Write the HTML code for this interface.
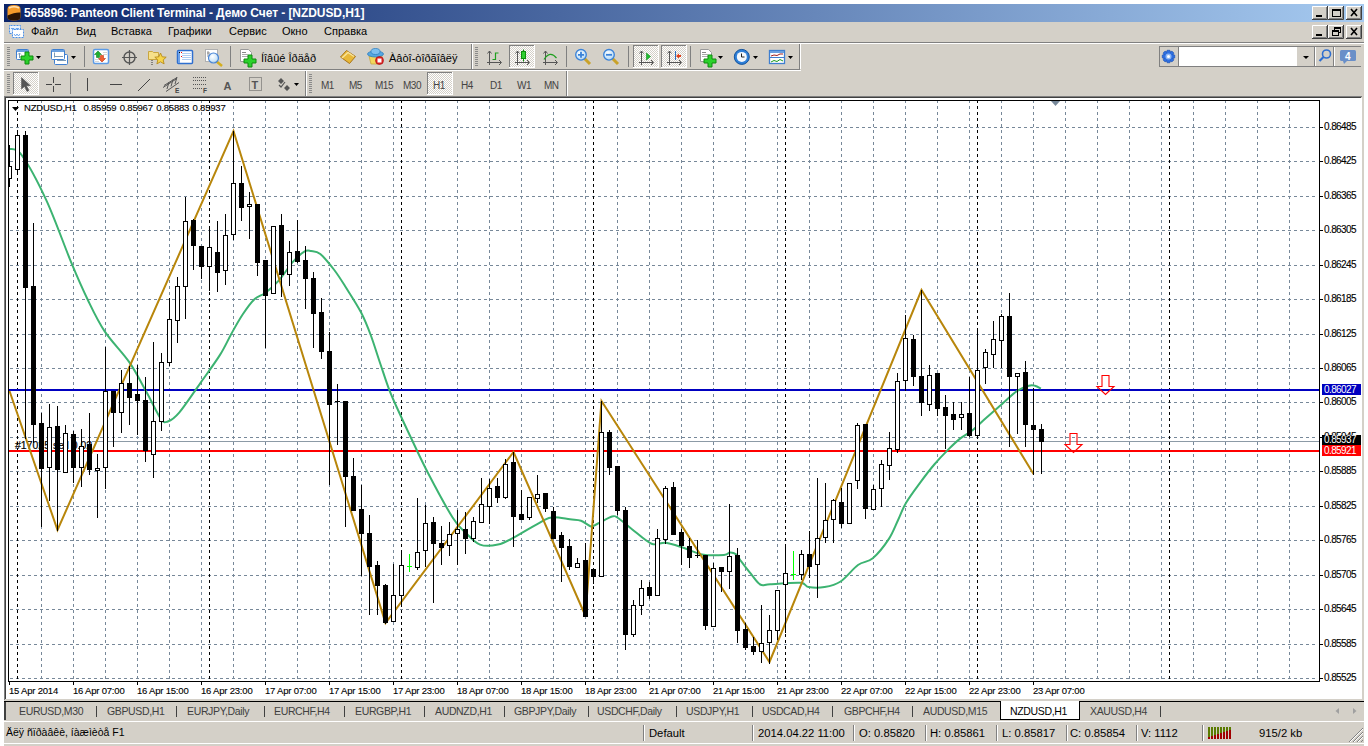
<!DOCTYPE html><html><head><meta charset="utf-8"><style>
*{margin:0;padding:0;box-sizing:border-box}
html,body{width:1368px;height:746px;overflow:hidden;background:#fff}
body{position:relative;font-family:"Liberation Sans",sans-serif;font-size:11px;color:#000}
.a{position:absolute}
.t{position:absolute;font-size:9.5px;line-height:12px;white-space:nowrap;color:#000;letter-spacing:-0.2px;-webkit-text-stroke:0.12px #000}
.p{position:absolute;font-size:10px;line-height:12px;white-space:nowrap;color:#000;letter-spacing:-0.6px;-webkit-text-stroke:0.12px #000}
.tf{position:absolute;top:80px;font-size:10px;line-height:12px;color:#444;letter-spacing:-0.5px;white-space:nowrap}
.tag{position:absolute;left:1322px;width:39px;height:11px;color:#fff;font-size:10px;line-height:11px;padding-left:2px;letter-spacing:-0.6px;white-space:nowrap}
.m{position:absolute;top:24px;font-size:11px;line-height:14px;white-space:nowrap}
.tab{position:absolute;top:704px;font-size:10.5px;line-height:14px;color:#404040;white-space:nowrap;letter-spacing:-0.35px}
.sep{position:absolute;top:706px;width:1px;height:11px;background:#404040}
.st{position:absolute;top:725px;font-size:10.5px;line-height:14px;white-space:nowrap}
.st2{position:absolute;top:726px;font-size:11.25px;line-height:14px;white-space:nowrap}
.ss{position:absolute;top:725px;width:2px;height:16px;border-left:1px solid #808080;border-right:1px solid #fff}
</style></head><body><div class="a" style="left:4px;top:4px;width:1360px;height:742px;background:#D4D0C8"></div><div class="a" style="left:4px;top:743px;width:1360px;height:1px;background:#fff"></div><div class="a" style="left:4px;top:4px;width:1360px;height:18px;background:linear-gradient(to right,#0A246A,#A6CAF0)"></div><div class="a" style="left:24px;top:5px;font-weight:bold;color:#fff;font-size:12px;line-height:16px;letter-spacing:-0.07px;white-space:nowrap">565896: Panteon Client Terminal - Демо Счет - [NZDUSD,H1]</div><div class="m" style="left:31px">Файл</div><div class="m" style="left:76px">Вид</div><div class="m" style="left:111px">Вставка</div><div class="m" style="left:168px">Графики</div><div class="m" style="left:229px">Сервис</div><div class="m" style="left:282px">Окно</div><div class="m" style="left:324px">Справка</div><div class="a" style="left:4px;top:42px;width:1360px;height:1px;background:#808080"></div><div class="a" style="left:4px;top:43px;width:1360px;height:1px;background:#fff"></div><svg width="1368" height="746" style="position:absolute;left:0;top:0"><rect x="4" y="96" width="1360" height="605" fill="#D4D0C8"/><rect x="4" y="96" width="1358" height="1" fill="#808080"/><rect x="4" y="96" width="1" height="604" fill="#808080"/><rect x="5" y="97" width="1356" height="1" fill="#404040"/><rect x="5" y="97" width="1" height="602" fill="#404040"/><rect x="6" y="98" width="1356" height="601" fill="#ffffff"/><g shape-rendering="crispEdges"><line x1="10" y1="127.5" x2="1318" y2="127.5" stroke="#778899" stroke-dasharray="3 3"/><line x1="10" y1="161.5" x2="1318" y2="161.5" stroke="#778899" stroke-dasharray="3 3"/><line x1="10" y1="196.5" x2="1318" y2="196.5" stroke="#778899" stroke-dasharray="3 3"/><line x1="10" y1="230.5" x2="1318" y2="230.5" stroke="#778899" stroke-dasharray="3 3"/><line x1="10" y1="265.5" x2="1318" y2="265.5" stroke="#778899" stroke-dasharray="3 3"/><line x1="10" y1="299.5" x2="1318" y2="299.5" stroke="#778899" stroke-dasharray="3 3"/><line x1="10" y1="334.5" x2="1318" y2="334.5" stroke="#778899" stroke-dasharray="3 3"/><line x1="10" y1="368.5" x2="1318" y2="368.5" stroke="#778899" stroke-dasharray="3 3"/><line x1="10" y1="402.5" x2="1318" y2="402.5" stroke="#778899" stroke-dasharray="3 3"/><line x1="10" y1="437.5" x2="1318" y2="437.5" stroke="#778899" stroke-dasharray="3 3"/><line x1="10" y1="471.5" x2="1318" y2="471.5" stroke="#778899" stroke-dasharray="3 3"/><line x1="10" y1="506.5" x2="1318" y2="506.5" stroke="#778899" stroke-dasharray="3 3"/><line x1="10" y1="540.5" x2="1318" y2="540.5" stroke="#778899" stroke-dasharray="3 3"/><line x1="10" y1="575.5" x2="1318" y2="575.5" stroke="#778899" stroke-dasharray="3 3"/><line x1="10" y1="609.5" x2="1318" y2="609.5" stroke="#778899" stroke-dasharray="3 3"/><line x1="10" y1="644.5" x2="1318" y2="644.5" stroke="#778899" stroke-dasharray="3 3"/><line x1="10" y1="678.5" x2="1318" y2="678.5" stroke="#778899" stroke-dasharray="3 3"/><line x1="41.5" y1="100" x2="41.5" y2="681" stroke="#778899" stroke-dasharray="3 3"/><line x1="73.5" y1="100" x2="73.5" y2="681" stroke="#778899" stroke-dasharray="3 3"/><line x1="105.5" y1="100" x2="105.5" y2="681" stroke="#778899" stroke-dasharray="3 3"/><line x1="137.5" y1="100" x2="137.5" y2="681" stroke="#778899" stroke-dasharray="3 3"/><line x1="169.5" y1="100" x2="169.5" y2="681" stroke="#778899" stroke-dasharray="3 3"/><line x1="201.5" y1="100" x2="201.5" y2="681" stroke="#778899" stroke-dasharray="3 3"/><line x1="233.5" y1="100" x2="233.5" y2="681" stroke="#778899" stroke-dasharray="3 3"/><line x1="265.5" y1="100" x2="265.5" y2="681" stroke="#778899" stroke-dasharray="3 3"/><line x1="297.5" y1="100" x2="297.5" y2="681" stroke="#778899" stroke-dasharray="3 3"/><line x1="329.5" y1="100" x2="329.5" y2="681" stroke="#778899" stroke-dasharray="3 3"/><line x1="361.5" y1="100" x2="361.5" y2="681" stroke="#778899" stroke-dasharray="3 3"/><line x1="393.5" y1="100" x2="393.5" y2="681" stroke="#778899" stroke-dasharray="3 3"/><line x1="425.5" y1="100" x2="425.5" y2="681" stroke="#778899" stroke-dasharray="3 3"/><line x1="457.5" y1="100" x2="457.5" y2="681" stroke="#778899" stroke-dasharray="3 3"/><line x1="489.5" y1="100" x2="489.5" y2="681" stroke="#778899" stroke-dasharray="3 3"/><line x1="521.5" y1="100" x2="521.5" y2="681" stroke="#778899" stroke-dasharray="3 3"/><line x1="553.5" y1="100" x2="553.5" y2="681" stroke="#778899" stroke-dasharray="3 3"/><line x1="585.5" y1="100" x2="585.5" y2="681" stroke="#778899" stroke-dasharray="3 3"/><line x1="617.5" y1="100" x2="617.5" y2="681" stroke="#778899" stroke-dasharray="3 3"/><line x1="649.5" y1="100" x2="649.5" y2="681" stroke="#778899" stroke-dasharray="3 3"/><line x1="681.5" y1="100" x2="681.5" y2="681" stroke="#778899" stroke-dasharray="3 3"/><line x1="713.5" y1="100" x2="713.5" y2="681" stroke="#778899" stroke-dasharray="3 3"/><line x1="745.5" y1="100" x2="745.5" y2="681" stroke="#778899" stroke-dasharray="3 3"/><line x1="777.5" y1="100" x2="777.5" y2="681" stroke="#778899" stroke-dasharray="3 3"/><line x1="809.5" y1="100" x2="809.5" y2="681" stroke="#778899" stroke-dasharray="3 3"/><line x1="841.5" y1="100" x2="841.5" y2="681" stroke="#778899" stroke-dasharray="3 3"/><line x1="873.5" y1="100" x2="873.5" y2="681" stroke="#778899" stroke-dasharray="3 3"/><line x1="905.5" y1="100" x2="905.5" y2="681" stroke="#778899" stroke-dasharray="3 3"/><line x1="937.5" y1="100" x2="937.5" y2="681" stroke="#778899" stroke-dasharray="3 3"/><line x1="969.5" y1="100" x2="969.5" y2="681" stroke="#778899" stroke-dasharray="3 3"/><line x1="1001.5" y1="100" x2="1001.5" y2="681" stroke="#778899" stroke-dasharray="3 3"/><line x1="1033.5" y1="100" x2="1033.5" y2="681" stroke="#778899" stroke-dasharray="3 3"/><line x1="1065.5" y1="100" x2="1065.5" y2="681" stroke="#778899" stroke-dasharray="3 3"/><line x1="1097.5" y1="100" x2="1097.5" y2="681" stroke="#778899" stroke-dasharray="3 3"/><line x1="1129.5" y1="100" x2="1129.5" y2="681" stroke="#778899" stroke-dasharray="3 3"/><line x1="1161.5" y1="100" x2="1161.5" y2="681" stroke="#778899" stroke-dasharray="3 3"/><line x1="1193.5" y1="100" x2="1193.5" y2="681" stroke="#778899" stroke-dasharray="3 3"/><line x1="1225.5" y1="100" x2="1225.5" y2="681" stroke="#778899" stroke-dasharray="3 3"/><line x1="1257.5" y1="100" x2="1257.5" y2="681" stroke="#778899" stroke-dasharray="3 3"/><line x1="1289.5" y1="100" x2="1289.5" y2="681" stroke="#778899" stroke-dasharray="3 3"/></g><g shape-rendering="crispEdges"><line x1="17.5" y1="100" x2="17.5" y2="681" stroke="#000" stroke-dasharray="3 3"/><line x1="209.5" y1="100" x2="209.5" y2="681" stroke="#000" stroke-dasharray="3 3"/><line x1="401.5" y1="100" x2="401.5" y2="681" stroke="#000" stroke-dasharray="3 3"/><line x1="593.5" y1="100" x2="593.5" y2="681" stroke="#000" stroke-dasharray="3 3"/><line x1="785.5" y1="100" x2="785.5" y2="681" stroke="#000" stroke-dasharray="3 3"/><line x1="977.5" y1="100" x2="977.5" y2="681" stroke="#000" stroke-dasharray="3 3"/><line x1="1169.5" y1="100" x2="1169.5" y2="681" stroke="#000" stroke-dasharray="3 3"/></g><text x="15" y="449" font-family="Liberation Sans" font-size="10.5" fill="#000" stroke="#000" stroke-width="0.2">#17025 sell 0.02</text><rect x="9" y="389" width="1310" height="2" fill="#0000C0"/><rect x="92" y="441" width="1227" height="1" fill="#8C9AA6"/><rect x="9" y="450" width="1310" height="2" fill="#FF0000"/><path d="M9,148.7 C11.1,149.8 15.4,146.3 21.6,155 C27.9,163.7 38.2,182.6 46.5,200.6 C54.8,218.6 64.5,246.3 71.4,262.9 C78.3,279.5 82.5,288.9 88,300.3 C93.5,311.7 97.8,321.0 104.7,331.4 C111.6,341.8 122.7,352.6 129.6,362.6 C136.5,372.6 141.0,382.3 146.2,391.6 C151.4,400.9 157.1,413.6 160.7,418.6 C164.3,423.6 164.7,422.5 167.8,421.5 C170.9,420.5 174.0,418.8 179.4,412.4 C184.8,406.0 193.4,392.9 200.2,383.3 C207.0,373.7 214.8,363.2 220,354.9 C225.2,346.6 227.6,340.5 231.4,333.7 C235.2,326.9 239.0,320.0 242.8,314.3 C246.6,308.6 250.4,303.1 254.2,299.5 C258.0,295.9 261.4,295.9 265.6,292.7 C269.8,289.5 274.6,285.2 279.2,280.1 C283.8,275.0 288.7,266.6 292.9,261.9 C297.1,257.1 301.3,253.4 304.3,251.6 C307.3,249.8 308.4,250.6 311.1,251 C313.8,251.4 316.5,250.8 320.3,253.9 C324.1,257.0 329.7,264.1 333.9,269.5 C338.1,274.9 340.8,279.3 345.3,286.5 C349.8,293.7 356.9,304.4 361.1,312.5 C365.3,320.6 367.5,326.4 370.7,335 C373.9,343.6 377.3,354.9 380.4,364 C383.5,373.1 386.3,382.0 389.2,389.7 C392.1,397.4 394.4,402.1 398,410 C401.6,417.9 405.6,426.5 410.6,437 C415.6,447.5 421.0,459.6 428,473 C435.0,486.4 446.4,507.7 452.6,517.5 C458.8,527.3 460.4,527.5 465,532 C469.6,536.5 474.5,542.5 480,544.6 C485.5,546.7 492.4,545.8 498,544.6 C503.6,543.4 506.4,541.5 513.7,537.6 C521.0,533.7 535.5,524.7 542,521.3 C548.5,517.9 548.3,517.6 553,517.3 C557.7,517.0 565.3,518.7 570,519.3 C574.7,519.9 577.5,519.5 581,520.7 C584.5,521.9 588.2,525.9 591,526.4 C593.8,526.9 594.5,525.1 598,523.5 C601.5,521.9 608.7,517.4 612,516.5 C615.3,515.6 614.7,515.9 618,518 C621.3,520.1 626.4,524.9 632,529.2 C637.6,533.5 646.0,541.5 651.6,543.8 C657.2,546.0 660.5,542.1 665.7,542.7 C670.9,543.3 676.6,545.5 682.6,547.5 C688.6,549.5 695.1,553.2 702,554.5 C708.9,555.8 719.3,555.3 724,555 C728.7,554.7 728.0,552.6 730,552.5 C732.0,552.4 734.1,552.8 736,554.3 C737.9,555.8 738.9,558.5 741.4,561.7 C743.9,564.9 747.7,569.9 750.8,573.7 C753.9,577.5 757.0,582.8 760.2,584.5 C763.5,586.2 763.6,584.5 770.3,584.2 C777.0,583.9 794.0,582.3 800.4,582.8 C806.8,583.3 804.5,586.4 808.5,587.1 C812.5,587.8 819.2,588.0 824.6,587.1 C830.0,586.2 835.0,585.2 840.6,581.5 C846.2,577.8 852.6,568.9 858,565 C863.4,561.1 867.6,562.6 872.8,558.3 C877.9,553.9 884.7,545.3 888.9,538.9 C893.1,532.5 895.2,526.0 898.1,520 C901.0,514.0 902.4,508.9 906.1,502.7 C909.8,496.5 915.5,489.0 920.2,482.6 C924.9,476.2 929.6,470.0 934.3,464.5 C939.0,459.0 944.0,453.8 948.4,449.4 C952.8,445.0 956.4,441.6 960.4,438.4 C964.4,435.2 968.5,433.5 972.5,430.3 C976.5,427.1 979.9,423.5 984.6,419.3 C989.3,415.1 995.3,409.9 1000.7,405.2 C1006.1,400.5 1012.1,394.4 1016.8,391.1 C1021.5,387.9 1025.8,386.6 1028.8,385.7 C1031.8,384.8 1032.9,385.2 1034.9,385.7 C1036.9,386.2 1039.9,388.0 1040.9,388.5" fill="none" stroke="#3CB371" stroke-width="2"/><polyline points="9.5,391 57.5,530 233.5,131 385.5,623 513.5,452 585.5,616 601.5,401 769.5,662 921.5,290 1033.5,474" fill="none" stroke="#B8860B" stroke-width="2" stroke-linejoin="miter"/><g shape-rendering="crispEdges" clip-path="url(#cc)"><rect x="9" y="145" width="1" height="42" fill="#000"/><rect x="7" y="166" width="5" height="13" fill="#000"/><rect x="8" y="167" width="3" height="11" fill="#fff"/><rect x="17" y="131" width="1" height="44" fill="#000"/><rect x="15" y="135" width="5" height="35" fill="#000"/><rect x="16" y="136" width="3" height="33" fill="#fff"/><rect x="25" y="131" width="1" height="308" fill="#000"/><rect x="23" y="135" width="5" height="153" fill="#000"/><rect x="33" y="223" width="1" height="220" fill="#000"/><rect x="31" y="286" width="5" height="139" fill="#000"/><rect x="41" y="413" width="1" height="114" fill="#000"/><rect x="39" y="423" width="5" height="46" fill="#000"/><rect x="49" y="404" width="1" height="97" fill="#000"/><rect x="47" y="427" width="5" height="41" fill="#000"/><rect x="48" y="428" width="3" height="39" fill="#fff"/><rect x="57" y="406" width="1" height="125" fill="#000"/><rect x="55" y="426" width="5" height="44" fill="#000"/><rect x="65" y="425" width="1" height="48" fill="#000"/><rect x="63" y="433" width="5" height="40" fill="#000"/><rect x="64" y="434" width="3" height="38" fill="#fff"/><rect x="73" y="431" width="1" height="52" fill="#000"/><rect x="71" y="434" width="5" height="34" fill="#000"/><rect x="81" y="429" width="1" height="58" fill="#000"/><rect x="79" y="446" width="5" height="22" fill="#000"/><rect x="80" y="447" width="3" height="20" fill="#fff"/><rect x="89" y="413" width="1" height="62" fill="#000"/><rect x="87" y="444" width="5" height="26" fill="#000"/><rect x="97" y="454" width="1" height="64" fill="#000"/><rect x="95" y="468" width="5" height="3" fill="#000"/><rect x="96" y="469" width="3" height="1" fill="#fff"/><rect x="105" y="347" width="1" height="142" fill="#000"/><rect x="103" y="391" width="5" height="77" fill="#000"/><rect x="104" y="392" width="3" height="75" fill="#fff"/><rect x="113" y="391" width="1" height="56" fill="#000"/><rect x="111" y="391" width="5" height="22" fill="#000"/><rect x="121" y="370" width="1" height="63" fill="#000"/><rect x="119" y="383" width="5" height="30" fill="#000"/><rect x="120" y="384" width="3" height="28" fill="#fff"/><rect x="129" y="366" width="1" height="59" fill="#000"/><rect x="127" y="383" width="5" height="15" fill="#000"/><rect x="137" y="365" width="1" height="70" fill="#000"/><rect x="135" y="394" width="5" height="7" fill="#000"/><rect x="145" y="377" width="1" height="85" fill="#000"/><rect x="143" y="400" width="5" height="51" fill="#000"/><rect x="153" y="342" width="1" height="136" fill="#000"/><rect x="151" y="421" width="5" height="34" fill="#000"/><rect x="152" y="422" width="3" height="32" fill="#fff"/><rect x="161" y="353" width="1" height="78" fill="#000"/><rect x="159" y="362" width="5" height="60" fill="#000"/><rect x="160" y="363" width="3" height="58" fill="#fff"/><rect x="169" y="298" width="1" height="68" fill="#000"/><rect x="167" y="319" width="5" height="44" fill="#000"/><rect x="168" y="320" width="3" height="42" fill="#fff"/><rect x="177" y="277" width="1" height="66" fill="#000"/><rect x="175" y="286" width="5" height="35" fill="#000"/><rect x="176" y="287" width="3" height="33" fill="#fff"/><rect x="185" y="197" width="1" height="122" fill="#000"/><rect x="183" y="221" width="5" height="66" fill="#000"/><rect x="184" y="222" width="3" height="64" fill="#fff"/><rect x="193" y="219" width="1" height="51" fill="#000"/><rect x="191" y="220" width="5" height="26" fill="#000"/><rect x="201" y="246" width="1" height="33" fill="#000"/><rect x="199" y="246" width="5" height="21" fill="#000"/><rect x="209" y="226" width="1" height="65" fill="#000"/><rect x="207" y="247" width="5" height="20" fill="#000"/><rect x="208" y="248" width="3" height="18" fill="#fff"/><rect x="217" y="221" width="1" height="71" fill="#000"/><rect x="215" y="252" width="5" height="21" fill="#000"/><rect x="225" y="214" width="1" height="71" fill="#000"/><rect x="223" y="235" width="5" height="36" fill="#000"/><rect x="224" y="236" width="3" height="34" fill="#fff"/><rect x="233" y="131" width="1" height="109" fill="#000"/><rect x="231" y="183" width="5" height="52" fill="#000"/><rect x="232" y="184" width="3" height="50" fill="#fff"/><rect x="241" y="166" width="1" height="55" fill="#000"/><rect x="239" y="183" width="5" height="25" fill="#000"/><rect x="249" y="192" width="1" height="47" fill="#000"/><rect x="247" y="204" width="5" height="3" fill="#000"/><rect x="248" y="205" width="3" height="1" fill="#fff"/><rect x="257" y="204" width="1" height="72" fill="#000"/><rect x="255" y="204" width="5" height="59" fill="#000"/><rect x="265" y="260" width="1" height="88" fill="#000"/><rect x="263" y="260" width="5" height="36" fill="#000"/><rect x="273" y="226" width="1" height="68" fill="#000"/><rect x="271" y="226" width="5" height="68" fill="#000"/><rect x="272" y="227" width="3" height="66" fill="#fff"/><rect x="281" y="214" width="1" height="83" fill="#000"/><rect x="279" y="225" width="5" height="50" fill="#000"/><rect x="289" y="241" width="1" height="45" fill="#000"/><rect x="287" y="252" width="5" height="23" fill="#000"/><rect x="288" y="253" width="3" height="21" fill="#fff"/><rect x="297" y="220" width="1" height="43" fill="#000"/><rect x="295" y="251" width="5" height="11" fill="#000"/><rect x="305" y="246" width="1" height="63" fill="#000"/><rect x="303" y="260" width="5" height="19" fill="#000"/><rect x="313" y="272" width="1" height="76" fill="#000"/><rect x="311" y="278" width="5" height="36" fill="#000"/><rect x="321" y="298" width="1" height="61" fill="#000"/><rect x="319" y="312" width="5" height="40" fill="#000"/><rect x="329" y="332" width="1" height="153" fill="#000"/><rect x="327" y="351" width="5" height="54" fill="#000"/><rect x="337" y="384" width="1" height="61" fill="#000"/><rect x="335" y="401" width="5" height="1" fill="#000"/><rect x="345" y="401" width="1" height="126" fill="#000"/><rect x="343" y="401" width="5" height="76" fill="#000"/><rect x="353" y="458" width="1" height="53" fill="#000"/><rect x="351" y="476" width="5" height="35" fill="#000"/><rect x="361" y="485" width="1" height="91" fill="#000"/><rect x="359" y="509" width="5" height="25" fill="#000"/><rect x="369" y="515" width="1" height="100" fill="#000"/><rect x="367" y="533" width="5" height="34" fill="#000"/><rect x="377" y="561" width="1" height="54" fill="#000"/><rect x="375" y="565" width="5" height="21" fill="#000"/><rect x="385" y="584" width="1" height="40" fill="#000"/><rect x="383" y="585" width="5" height="38" fill="#000"/><rect x="393" y="564" width="1" height="58" fill="#000"/><rect x="391" y="595" width="5" height="27" fill="#000"/><rect x="392" y="596" width="3" height="25" fill="#fff"/><rect x="401" y="550" width="1" height="57" fill="#000"/><rect x="399" y="565" width="5" height="31" fill="#000"/><rect x="400" y="566" width="3" height="29" fill="#fff"/><rect x="409" y="554" width="1" height="18" fill="#00FF00"/><rect x="407" y="566" width="5" height="1" fill="#00FF00"/><rect x="417" y="498" width="1" height="72" fill="#000"/><rect x="415" y="552" width="5" height="16" fill="#000"/><rect x="416" y="553" width="3" height="14" fill="#fff"/><rect x="425" y="505" width="1" height="62" fill="#000"/><rect x="423" y="523" width="5" height="28" fill="#000"/><rect x="424" y="524" width="3" height="26" fill="#fff"/><rect x="433" y="517" width="1" height="86" fill="#000"/><rect x="431" y="522" width="5" height="22" fill="#000"/><rect x="441" y="526" width="1" height="39" fill="#000"/><rect x="439" y="543" width="5" height="5" fill="#000"/><rect x="449" y="522" width="1" height="34" fill="#000"/><rect x="447" y="534" width="5" height="12" fill="#000"/><rect x="448" y="535" width="3" height="10" fill="#fff"/><rect x="457" y="510" width="1" height="55" fill="#000"/><rect x="455" y="529" width="5" height="5" fill="#000"/><rect x="456" y="530" width="3" height="3" fill="#fff"/><rect x="465" y="512" width="1" height="42" fill="#000"/><rect x="463" y="529" width="5" height="10" fill="#000"/><rect x="473" y="517" width="1" height="25" fill="#000"/><rect x="471" y="521" width="5" height="18" fill="#000"/><rect x="472" y="522" width="3" height="16" fill="#fff"/><rect x="481" y="478" width="1" height="45" fill="#000"/><rect x="479" y="504" width="5" height="19" fill="#000"/><rect x="480" y="505" width="3" height="17" fill="#fff"/><rect x="489" y="479" width="1" height="45" fill="#000"/><rect x="487" y="488" width="5" height="19" fill="#000"/><rect x="488" y="489" width="3" height="17" fill="#fff"/><rect x="497" y="478" width="1" height="25" fill="#000"/><rect x="495" y="486" width="5" height="12" fill="#000"/><rect x="505" y="459" width="1" height="40" fill="#000"/><rect x="503" y="464" width="5" height="34" fill="#000"/><rect x="504" y="465" width="3" height="32" fill="#fff"/><rect x="513" y="452" width="1" height="95" fill="#000"/><rect x="511" y="462" width="5" height="55" fill="#000"/><rect x="521" y="490" width="1" height="30" fill="#000"/><rect x="519" y="514" width="5" height="6" fill="#000"/><rect x="529" y="497" width="1" height="23" fill="#000"/><rect x="527" y="497" width="5" height="21" fill="#000"/><rect x="528" y="498" width="3" height="19" fill="#fff"/><rect x="537" y="475" width="1" height="28" fill="#000"/><rect x="535" y="494" width="5" height="5" fill="#000"/><rect x="536" y="495" width="3" height="3" fill="#fff"/><rect x="545" y="493" width="1" height="19" fill="#000"/><rect x="543" y="493" width="5" height="16" fill="#000"/><rect x="553" y="507" width="1" height="32" fill="#000"/><rect x="551" y="511" width="5" height="28" fill="#000"/><rect x="561" y="532" width="1" height="50" fill="#000"/><rect x="559" y="535" width="5" height="13" fill="#000"/><rect x="569" y="539" width="1" height="31" fill="#000"/><rect x="567" y="546" width="5" height="21" fill="#000"/><rect x="577" y="558" width="1" height="10" fill="#000"/><rect x="575" y="563" width="5" height="5" fill="#000"/><rect x="576" y="564" width="3" height="3" fill="#fff"/><rect x="585" y="543" width="1" height="74" fill="#000"/><rect x="583" y="560" width="5" height="57" fill="#000"/><rect x="593" y="568" width="1" height="16" fill="#000"/><rect x="591" y="569" width="5" height="8" fill="#000"/><rect x="601" y="401" width="1" height="176" fill="#000"/><rect x="599" y="432" width="5" height="145" fill="#000"/><rect x="600" y="433" width="3" height="143" fill="#fff"/><rect x="609" y="430" width="1" height="45" fill="#000"/><rect x="607" y="432" width="5" height="36" fill="#000"/><rect x="617" y="466" width="1" height="49" fill="#000"/><rect x="615" y="466" width="5" height="45" fill="#000"/><rect x="625" y="507" width="1" height="143" fill="#000"/><rect x="623" y="510" width="5" height="125" fill="#000"/><rect x="633" y="600" width="1" height="37" fill="#000"/><rect x="631" y="605" width="5" height="30" fill="#000"/><rect x="632" y="606" width="3" height="28" fill="#fff"/><rect x="641" y="580" width="1" height="35" fill="#000"/><rect x="639" y="588" width="5" height="18" fill="#000"/><rect x="640" y="589" width="3" height="16" fill="#fff"/><rect x="649" y="582" width="1" height="17" fill="#000"/><rect x="647" y="587" width="5" height="9" fill="#000"/><rect x="657" y="529" width="1" height="67" fill="#000"/><rect x="655" y="538" width="5" height="58" fill="#000"/><rect x="656" y="539" width="3" height="56" fill="#fff"/><rect x="665" y="486" width="1" height="58" fill="#000"/><rect x="663" y="488" width="5" height="52" fill="#000"/><rect x="664" y="489" width="3" height="50" fill="#fff"/><rect x="673" y="482" width="1" height="53" fill="#000"/><rect x="671" y="487" width="5" height="48" fill="#000"/><rect x="681" y="529" width="1" height="36" fill="#000"/><rect x="679" y="532" width="5" height="14" fill="#000"/><rect x="689" y="538" width="1" height="30" fill="#000"/><rect x="687" y="546" width="5" height="12" fill="#000"/><rect x="697" y="540" width="1" height="18" fill="#000"/><rect x="695" y="555" width="5" height="1" fill="#000"/><rect x="705" y="555" width="1" height="75" fill="#000"/><rect x="703" y="555" width="5" height="71" fill="#000"/><rect x="713" y="563" width="1" height="64" fill="#000"/><rect x="711" y="568" width="5" height="59" fill="#000"/><rect x="712" y="569" width="3" height="57" fill="#fff"/><rect x="721" y="567" width="1" height="25" fill="#000"/><rect x="719" y="567" width="5" height="5" fill="#000"/><rect x="729" y="504" width="1" height="85" fill="#000"/><rect x="727" y="556" width="5" height="16" fill="#000"/><rect x="728" y="557" width="3" height="14" fill="#fff"/><rect x="737" y="548" width="1" height="95" fill="#000"/><rect x="735" y="555" width="5" height="76" fill="#000"/><rect x="745" y="623" width="1" height="27" fill="#000"/><rect x="743" y="629" width="5" height="19" fill="#000"/><rect x="753" y="637" width="1" height="18" fill="#000"/><rect x="751" y="646" width="5" height="6" fill="#000"/><rect x="761" y="605" width="1" height="58" fill="#000"/><rect x="759" y="643" width="5" height="9" fill="#000"/><rect x="760" y="644" width="3" height="7" fill="#fff"/><rect x="769" y="615" width="1" height="49" fill="#000"/><rect x="767" y="630" width="5" height="13" fill="#000"/><rect x="768" y="631" width="3" height="11" fill="#fff"/><rect x="777" y="590" width="1" height="50" fill="#000"/><rect x="775" y="590" width="5" height="41" fill="#000"/><rect x="776" y="591" width="3" height="39" fill="#fff"/><rect x="785" y="544" width="1" height="89" fill="#000"/><rect x="783" y="573" width="5" height="12" fill="#000"/><rect x="784" y="574" width="3" height="10" fill="#fff"/><rect x="793" y="551" width="1" height="29" fill="#00FF00"/><rect x="791" y="574" width="5" height="1" fill="#00FF00"/><rect x="801" y="550" width="1" height="30" fill="#000"/><rect x="799" y="554" width="5" height="21" fill="#000"/><rect x="800" y="555" width="3" height="19" fill="#fff"/><rect x="809" y="531" width="1" height="47" fill="#000"/><rect x="807" y="554" width="5" height="13" fill="#000"/><rect x="817" y="478" width="1" height="120" fill="#000"/><rect x="815" y="538" width="5" height="27" fill="#000"/><rect x="816" y="539" width="3" height="25" fill="#fff"/><rect x="825" y="483" width="1" height="60" fill="#000"/><rect x="823" y="520" width="5" height="18" fill="#000"/><rect x="824" y="521" width="3" height="16" fill="#fff"/><rect x="833" y="499" width="1" height="44" fill="#000"/><rect x="831" y="500" width="5" height="20" fill="#000"/><rect x="832" y="501" width="3" height="18" fill="#fff"/><rect x="841" y="488" width="1" height="40" fill="#000"/><rect x="839" y="502" width="5" height="22" fill="#000"/><rect x="849" y="483" width="1" height="41" fill="#000"/><rect x="847" y="483" width="5" height="41" fill="#000"/><rect x="848" y="484" width="3" height="39" fill="#fff"/><rect x="857" y="423" width="1" height="66" fill="#000"/><rect x="855" y="425" width="5" height="56" fill="#000"/><rect x="856" y="426" width="3" height="54" fill="#fff"/><rect x="865" y="424" width="1" height="95" fill="#000"/><rect x="863" y="424" width="5" height="85" fill="#000"/><rect x="873" y="485" width="1" height="25" fill="#000"/><rect x="871" y="489" width="5" height="21" fill="#000"/><rect x="872" y="490" width="3" height="19" fill="#fff"/><rect x="881" y="460" width="1" height="47" fill="#000"/><rect x="879" y="464" width="5" height="25" fill="#000"/><rect x="880" y="465" width="3" height="23" fill="#fff"/><rect x="889" y="432" width="1" height="48" fill="#000"/><rect x="887" y="448" width="5" height="18" fill="#000"/><rect x="888" y="449" width="3" height="16" fill="#fff"/><rect x="897" y="373" width="1" height="80" fill="#000"/><rect x="895" y="381" width="5" height="69" fill="#000"/><rect x="896" y="382" width="3" height="67" fill="#fff"/><rect x="905" y="315" width="1" height="76" fill="#000"/><rect x="903" y="338" width="5" height="43" fill="#000"/><rect x="904" y="339" width="3" height="41" fill="#fff"/><rect x="913" y="335" width="1" height="51" fill="#000"/><rect x="911" y="339" width="5" height="38" fill="#000"/><rect x="921" y="290" width="1" height="126" fill="#000"/><rect x="919" y="376" width="5" height="27" fill="#000"/><rect x="929" y="365" width="1" height="46" fill="#000"/><rect x="927" y="375" width="5" height="30" fill="#000"/><rect x="928" y="376" width="3" height="28" fill="#fff"/><rect x="937" y="373" width="1" height="43" fill="#000"/><rect x="935" y="373" width="5" height="36" fill="#000"/><rect x="945" y="395" width="1" height="54" fill="#000"/><rect x="943" y="407" width="5" height="9" fill="#000"/><rect x="953" y="402" width="1" height="28" fill="#000"/><rect x="951" y="414" width="5" height="6" fill="#000"/><rect x="961" y="402" width="1" height="28" fill="#000"/><rect x="959" y="414" width="5" height="4" fill="#000"/><rect x="960" y="415" width="3" height="2" fill="#fff"/><rect x="969" y="377" width="1" height="60" fill="#000"/><rect x="967" y="413" width="5" height="23" fill="#000"/><rect x="977" y="328" width="1" height="111" fill="#000"/><rect x="975" y="370" width="5" height="66" fill="#000"/><rect x="976" y="371" width="3" height="64" fill="#fff"/><rect x="985" y="349" width="1" height="35" fill="#000"/><rect x="983" y="352" width="5" height="16" fill="#000"/><rect x="984" y="353" width="3" height="14" fill="#fff"/><rect x="993" y="321" width="1" height="47" fill="#000"/><rect x="991" y="339" width="5" height="16" fill="#000"/><rect x="992" y="340" width="3" height="14" fill="#fff"/><rect x="1001" y="314" width="1" height="54" fill="#000"/><rect x="999" y="316" width="5" height="25" fill="#000"/><rect x="1000" y="317" width="3" height="23" fill="#fff"/><rect x="1009" y="293" width="1" height="154" fill="#000"/><rect x="1007" y="316" width="5" height="61" fill="#000"/><rect x="1017" y="373" width="1" height="61" fill="#000"/><rect x="1015" y="373" width="5" height="4" fill="#000"/><rect x="1016" y="374" width="3" height="2" fill="#fff"/><rect x="1025" y="361" width="1" height="86" fill="#000"/><rect x="1023" y="372" width="5" height="53" fill="#000"/><rect x="1033" y="388" width="1" height="87" fill="#000"/><rect x="1031" y="425" width="5" height="5" fill="#000"/><rect x="1041" y="424" width="1" height="50" fill="#000"/><rect x="1039" y="429" width="5" height="13" fill="#000"/></g><defs><clipPath id="cc"><rect x="9" y="101" width="1310" height="580"/></clipPath></defs><path d="M1102 375.5 H1109 V386.5 H1114 L1105.5 394.5 L1097 386.5 H1102 Z" fill="none" stroke="#FF0000" stroke-width="1.1"/><path d="M1070 433.5 H1077 V444.5 H1082 L1073.5 452.5 L1065 444.5 H1070 Z" fill="none" stroke="#FF0000" stroke-width="1.1"/><g shape-rendering="crispEdges"><rect x="8" y="100" width="1312" height="1" fill="#000"/><rect x="8" y="681" width="1312" height="1" fill="#000"/><rect x="8" y="100" width="1" height="582" fill="#000"/><rect x="1319" y="100" width="1" height="582" fill="#000"/><rect x="1320" y="127" width="3" height="1" fill="#000"/><rect x="1320" y="161" width="3" height="1" fill="#000"/><rect x="1320" y="196" width="3" height="1" fill="#000"/><rect x="1320" y="230" width="3" height="1" fill="#000"/><rect x="1320" y="265" width="3" height="1" fill="#000"/><rect x="1320" y="299" width="3" height="1" fill="#000"/><rect x="1320" y="334" width="3" height="1" fill="#000"/><rect x="1320" y="368" width="3" height="1" fill="#000"/><rect x="1320" y="402" width="3" height="1" fill="#000"/><rect x="1320" y="437" width="3" height="1" fill="#000"/><rect x="1320" y="471" width="3" height="1" fill="#000"/><rect x="1320" y="506" width="3" height="1" fill="#000"/><rect x="1320" y="540" width="3" height="1" fill="#000"/><rect x="1320" y="575" width="3" height="1" fill="#000"/><rect x="1320" y="609" width="3" height="1" fill="#000"/><rect x="1320" y="644" width="3" height="1" fill="#000"/><rect x="1320" y="678" width="3" height="1" fill="#000"/><rect x="9" y="682" width="1" height="3" fill="#000"/><rect x="73" y="682" width="1" height="3" fill="#000"/><rect x="137" y="682" width="1" height="3" fill="#000"/><rect x="201" y="682" width="1" height="3" fill="#000"/><rect x="265" y="682" width="1" height="3" fill="#000"/><rect x="329" y="682" width="1" height="3" fill="#000"/><rect x="393" y="682" width="1" height="3" fill="#000"/><rect x="457" y="682" width="1" height="3" fill="#000"/><rect x="521" y="682" width="1" height="3" fill="#000"/><rect x="585" y="682" width="1" height="3" fill="#000"/><rect x="649" y="682" width="1" height="3" fill="#000"/><rect x="713" y="682" width="1" height="3" fill="#000"/><rect x="777" y="682" width="1" height="3" fill="#000"/><rect x="841" y="682" width="1" height="3" fill="#000"/><rect x="905" y="682" width="1" height="3" fill="#000"/><rect x="969" y="682" width="1" height="3" fill="#000"/><rect x="1033" y="682" width="1" height="3" fill="#000"/></g><path d="M1051 101 L1060 101 L1055.5 106 Z" fill="#778899"/><path d="M12 107 L19 107 L15.5 111 Z" fill="#000"/></svg><svg width="1368" height="100" style="position:absolute;left:0;top:0"><defs><pattern id="chk" width="2" height="2" patternUnits="userSpaceOnUse"><rect width="2" height="2" fill="#fff"/><rect width="1" height="1" fill="#D4D0C8"/><rect x="1" y="1" width="1" height="1" fill="#D4D0C8"/></pattern><radialGradient id="lens" cx="0.4" cy="0.35" r="0.7"><stop offset="0" stop-color="#fff"/><stop offset="1" stop-color="#a9d4f5"/></radialGradient><linearGradient id="tb" x1="0" y1="0" x2="1" y2="0"><stop offset="0" stop-color="#0A246A"/><stop offset="1" stop-color="#A6CAF0"/></linearGradient></defs><g shape-rendering="crispEdges"><rect x="4" y="69" width="796" height="1" fill="#808080"/><rect x="4" y="70" width="797" height="1" fill="#fff"/><rect x="471" y="44" width="1" height="25" fill="#808080"/><rect x="472" y="44" width="1" height="25" fill="#fff"/><rect x="799" y="44" width="1" height="25" fill="#808080"/><rect x="800" y="44" width="1" height="25" fill="#fff"/><rect x="305" y="71" width="1" height="25" fill="#808080"/><rect x="306" y="71" width="1" height="25" fill="#fff"/><rect x="566" y="71" width="1" height="25" fill="#808080"/><rect x="567" y="71" width="1" height="25" fill="#fff"/><rect x="7" y="47" width="3" height="1" fill="#8a8a8a"/><rect x="7" y="49" width="3" height="1" fill="#8a8a8a"/><rect x="7" y="51" width="3" height="1" fill="#8a8a8a"/><rect x="7" y="53" width="3" height="1" fill="#8a8a8a"/><rect x="7" y="55" width="3" height="1" fill="#8a8a8a"/><rect x="7" y="57" width="3" height="1" fill="#8a8a8a"/><rect x="7" y="59" width="3" height="1" fill="#8a8a8a"/><rect x="7" y="61" width="3" height="1" fill="#8a8a8a"/><rect x="7" y="63" width="3" height="1" fill="#8a8a8a"/><rect x="7" y="65" width="3" height="1" fill="#8a8a8a"/><rect x="475" y="47" width="3" height="1" fill="#8a8a8a"/><rect x="475" y="49" width="3" height="1" fill="#8a8a8a"/><rect x="475" y="51" width="3" height="1" fill="#8a8a8a"/><rect x="475" y="53" width="3" height="1" fill="#8a8a8a"/><rect x="475" y="55" width="3" height="1" fill="#8a8a8a"/><rect x="475" y="57" width="3" height="1" fill="#8a8a8a"/><rect x="475" y="59" width="3" height="1" fill="#8a8a8a"/><rect x="475" y="61" width="3" height="1" fill="#8a8a8a"/><rect x="475" y="63" width="3" height="1" fill="#8a8a8a"/><rect x="475" y="65" width="3" height="1" fill="#8a8a8a"/><rect x="7" y="74" width="3" height="1" fill="#8a8a8a"/><rect x="7" y="76" width="3" height="1" fill="#8a8a8a"/><rect x="7" y="78" width="3" height="1" fill="#8a8a8a"/><rect x="7" y="80" width="3" height="1" fill="#8a8a8a"/><rect x="7" y="82" width="3" height="1" fill="#8a8a8a"/><rect x="7" y="84" width="3" height="1" fill="#8a8a8a"/><rect x="7" y="86" width="3" height="1" fill="#8a8a8a"/><rect x="7" y="88" width="3" height="1" fill="#8a8a8a"/><rect x="7" y="90" width="3" height="1" fill="#8a8a8a"/><rect x="7" y="92" width="3" height="1" fill="#8a8a8a"/><rect x="309" y="74" width="3" height="1" fill="#8a8a8a"/><rect x="309" y="76" width="3" height="1" fill="#8a8a8a"/><rect x="309" y="78" width="3" height="1" fill="#8a8a8a"/><rect x="309" y="80" width="3" height="1" fill="#8a8a8a"/><rect x="309" y="82" width="3" height="1" fill="#8a8a8a"/><rect x="309" y="84" width="3" height="1" fill="#8a8a8a"/><rect x="309" y="86" width="3" height="1" fill="#8a8a8a"/><rect x="309" y="88" width="3" height="1" fill="#8a8a8a"/><rect x="309" y="90" width="3" height="1" fill="#8a8a8a"/><rect x="309" y="92" width="3" height="1" fill="#8a8a8a"/><rect x="84" y="46" width="1" height="21" fill="#808080"/><rect x="230" y="46" width="1" height="21" fill="#808080"/><rect x="566" y="46" width="1" height="21" fill="#808080"/><rect x="628" y="46" width="1" height="21" fill="#808080"/><rect x="690" y="46" width="1" height="21" fill="#808080"/><rect x="70" y="73" width="1" height="21" fill="#808080"/><rect x="13" y="72" width="26" height="23" fill="url(#chk)"/><rect x="13" y="72" width="26" height="1" fill="#808080"/><rect x="13" y="72" width="1" height="23" fill="#808080"/><rect x="13" y="94" width="26" height="1" fill="#fff"/><rect x="38" y="72" width="1" height="23" fill="#fff"/><rect x="427" y="72" width="26" height="23" fill="url(#chk)"/><rect x="427" y="72" width="26" height="1" fill="#808080"/><rect x="427" y="72" width="1" height="23" fill="#808080"/><rect x="427" y="94" width="26" height="1" fill="#fff"/><rect x="452" y="72" width="1" height="23" fill="#fff"/><rect x="509" y="45" width="26" height="23" fill="url(#chk)"/><rect x="509" y="45" width="26" height="1" fill="#808080"/><rect x="509" y="45" width="1" height="23" fill="#808080"/><rect x="509" y="67" width="26" height="1" fill="#fff"/><rect x="534" y="45" width="1" height="23" fill="#fff"/><rect x="633" y="45" width="26" height="23" fill="url(#chk)"/><rect x="633" y="45" width="26" height="1" fill="#808080"/><rect x="633" y="45" width="1" height="23" fill="#808080"/><rect x="633" y="67" width="26" height="1" fill="#fff"/><rect x="658" y="45" width="1" height="23" fill="#fff"/><rect x="661" y="45" width="26" height="23" fill="url(#chk)"/><rect x="661" y="45" width="26" height="1" fill="#808080"/><rect x="661" y="45" width="1" height="23" fill="#808080"/><rect x="661" y="67" width="26" height="1" fill="#fff"/><rect x="686" y="45" width="1" height="23" fill="#fff"/></g><rect x="16.5" y="49.5" width="12" height="10" rx="1" fill="#fff" stroke="#3F7FD0"/><rect x="17" y="50" width="11" height="2" fill="#6AA0E0"/><path d="M19.5 53 v5 M18 54.5 l1.5 -1.5 l1.5 1.5" stroke="#7a9ab8" fill="none"/><path d="M25 52 h4 v4 h4 v4 h-4 v4 h-4 v-4 h-4 v-4 h4 z" fill="#2BD12B" stroke="#0E8A0E" stroke-width="1" stroke-linejoin="miter"/><path d="M36 56 h5 l-2.5 3 z" fill="#000"/><rect x="54.5" y="54.5" width="13" height="10" rx="1" fill="#fff" stroke="#3F7FD0"/><path d="M57 60.5 h9" stroke="#7a9ab8"/><rect x="51.5" y="49.5" width="13" height="10" rx="1" fill="#fff" stroke="#3F7FD0"/><rect x="52" y="50" width="12" height="2" fill="#6AA0E0"/><path d="M54.5 52.5 v5 M54 56.5 h9" stroke="#7a9ab8" fill="none"/><path d="M71 56 h5 l-2.5 3 z" fill="#000"/><rect x="93.5" y="49.5" width="15" height="14" rx="1.5" fill="#fff" stroke="#5C9BE6" stroke-width="1.5"/><path d="M98 51 l3.5 3.5 h-2 v3 h-3 v-3 h-2 z" fill="#1FAF2F" stroke="#0f7f1f" stroke-width="0.6"/><path d="M102 62 l3.5 -3.5 h-2 v-3 h-3 v3 h-2 z" fill="#F06030" stroke="#c03010" stroke-width="0.6"/><path d="M103 52.5 h4 M103 54.5 h4 M95 59.5 h4 M95 61.5 h4" stroke="#ccc" stroke-width="0.8"/><circle cx="129.5" cy="57.5" r="5.5" fill="none" stroke="#555" stroke-width="1.4"/><path d="M129.5 50 v15 M122 57.5 h15" stroke="#555" stroke-width="1.2"/><path d="M148.5 51.5 h4 l1 1 h5 v7 h-10 z" fill="#F6E08A" stroke="#C9A640"/><path d="M152 60 v6" stroke="#333" stroke-dasharray="1 1"/><path d="M160.5 53 l1.7 3.8 4 .4 -3 2.7 .9 4 -3.6 -2.1 -3.6 2.1 .9 -4 -3 -2.7 4 -.4 z" fill="#F7D54A" stroke="#B78B1C" stroke-width="0.9"/><rect x="177.5" y="50.5" width="15" height="13" rx="1" fill="#fff" stroke="#2F6FCF" stroke-width="1.5"/><rect x="178" y="51" width="2" height="12" fill="#6fa3e8"/><path d="M182 53.5 h9 M182 55.5 h9 M182 57.5 h9 M182 59.5 h9" stroke="#9cc0ef" stroke-width="0.8"/><rect x="181" y="52" width="1" height="1" fill="#e00"/><rect x="181" y="56" width="1" height="1" fill="#e00"/><rect x="179" y="52" width="1" height="1" fill="#000"/><rect x="205.5" y="49.5" width="12" height="12" fill="#fff" stroke="#b0b0b0"/><path d="M208 51 v6 M207 53 h3" stroke="#777" stroke-width="0.8"/><path d="M216 61 l6 5" stroke="#D4AE1E" stroke-width="2.5"/><circle cx="213.5" cy="58" r="5" fill="url(#lens)" stroke="#4a86d6" stroke-width="1.2" fill-opacity="0.85"/><path d="M240.5 49.5 h8 l3 3 v9 h-11 z" fill="#fff" stroke="#9a9a9a"/><rect x="242" y="52" width="4" height="1" fill="#888"/><rect x="242" y="54" width="6" height="1" fill="#aaa"/><rect x="242" y="56" width="6" height="1" fill="#aaa"/><path d="M248 55 h4 v4 h4 v4 h-4 v4 h-4 v-4 h-4 v-4 h4 z" fill="#2BD12B" stroke="#0E8A0E" stroke-width="1" stroke-linejoin="miter"/><path d="M340.5 57 l6 -6.5 l9 6 l-6 7 z" fill="#E8B838" stroke="#A8741A"/><path d="M342 58 l6 -5.5 l6 4" fill="none" stroke="#F7E39A" stroke-width="1.5"/><path d="M369 56 h13 l-2 8 h-9 z" fill="#F2D75C" stroke="#C9A640" stroke-width="0.8"/><ellipse cx="375.5" cy="54" rx="8" ry="3" fill="#56A7E0" stroke="#2f7fc0" stroke-width="0.8"/><ellipse cx="375.5" cy="51.5" rx="4.5" ry="3" fill="#7fc0ef" stroke="#2f7fc0" stroke-width="0.8"/><circle cx="379.5" cy="60.5" r="4" fill="#E02020" stroke="#a01010" stroke-width="0.6"/><rect x="377.5" y="58.5" width="4" height="4" fill="#fff"/><rect x="489" y="51" width="1" height="14" fill="#555"/><path d="M487.5 53.5 L489.5 51 L491.5 53.5" fill="none" stroke="#555"/><rect x="487" y="62" width="14" height="1" fill="#555"/><path d="M499 60 L501.5 62.5 L499 65" fill="none" stroke="#555"/><path d="M495.5 52.5 v7.5 M495.5 53 h3 M495.5 59.5 h-3" stroke="#1F9F1F" stroke-width="1.2" fill="none"/><rect x="517" y="51" width="1" height="14" fill="#555"/><path d="M515.5 53.5 L517.5 51 L519.5 53.5" fill="none" stroke="#555"/><rect x="515" y="62" width="14" height="1" fill="#555"/><path d="M527 60 L529.5 62.5 L527 65" fill="none" stroke="#555"/><path d="M523.5 49.5 v12" stroke="#0f8f0f"/><rect x="521.5" y="51.5" width="4" height="7" fill="#31d031" stroke="#0f8f0f"/><rect x="545" y="51" width="1" height="14" fill="#555"/><path d="M543.5 53.5 L545.5 51 L547.5 53.5" fill="none" stroke="#555"/><rect x="543" y="62" width="14" height="1" fill="#555"/><path d="M555 60 L557.5 62.5 L555 65" fill="none" stroke="#555"/><path d="M544 59.5 Q550 50 556.5 58" fill="none" stroke="#1F9F1F" stroke-width="1.2"/><path d="M584 58 l6 6" stroke="#C9A22A" stroke-width="3"/><circle cx="581" cy="54.8" r="5.3" fill="url(#lens)" stroke="#3A82D8" stroke-width="1.3"/><path d="M578 54.8 h6 M581 51.8 v6" stroke="#3A82D8" stroke-width="1.8"/><path d="M612 58 l6 6" stroke="#C9A22A" stroke-width="3"/><circle cx="609" cy="54.8" r="5.3" fill="url(#lens)" stroke="#3A82D8" stroke-width="1.3"/><path d="M606 54.8 h6" stroke="#3A82D8" stroke-width="1.8"/><rect x="641" y="51" width="1" height="14" fill="#555"/><path d="M639.5 53.5 L641.5 51 L643.5 53.5" fill="none" stroke="#555"/><rect x="639" y="62" width="14" height="1" fill="#555"/><path d="M651 60 L653.5 62.5 L651 65" fill="none" stroke="#555"/><path d="M646.5 53 v7 l4 -3.5 z" fill="#1FBF2F" stroke="#0f8f1f" stroke-width="0.6"/><rect x="669" y="51" width="1" height="14" fill="#555"/><path d="M667.5 53.5 L669.5 51 L671.5 53.5" fill="none" stroke="#555"/><rect x="667" y="62" width="14" height="1" fill="#555"/><path d="M679 60 L681.5 62.5 L679 65" fill="none" stroke="#555"/><rect x="675" y="51" width="1" height="9" fill="#2a6fbf"/><path d="M676 56 l3 -2.5 v1.5 h2 v2 h-2 v1.5 z" fill="#E0401A"/><path d="M700.5 49.5 h8 l3 3 v9 h-11 z" fill="#fff" stroke="#9a9a9a"/><rect x="702" y="52" width="4" height="1" fill="#888"/><rect x="702" y="54" width="6" height="1" fill="#aaa"/><rect x="702" y="56" width="6" height="1" fill="#aaa"/><path d="M708 55 h4 v4 h4 v4 h-4 v4 h-4 v-4 h-4 v-4 h4 z" fill="#2BD12B" stroke="#0E8A0E" stroke-width="1" stroke-linejoin="miter"/><path d="M718 56 h5 l-2.5 3 z" fill="#000"/><circle cx="741.8" cy="56.9" r="7.5" fill="#2E7FD8" stroke="#14539c" stroke-width="1"/><circle cx="741.8" cy="56.9" r="5" fill="#F4F8FC"/><path d="M741.5 53.5 v3.5 h3" fill="none" stroke="#222" stroke-width="1"/><path d="M753 56 h5 l-2.5 3 z" fill="#000"/><rect x="769.5" y="50.5" width="15" height="13" fill="#fff" stroke="#3F7FD0" stroke-width="1.3"/><rect x="770" y="51" width="14" height="2" fill="#6AA0E0"/><path d="M770 57.5 h14" stroke="#3F7FD0"/><path d="M771 56 l3 -1 l3 0.5 l3 -1.5 l3 0" fill="none" stroke="#A02020"/><path d="M771 62 l3 -1.5 l3 1 l3 -2 l3 1.5" fill="none" stroke="#1a9a1a"/><path d="M788 56 h5 l-2.5 3 z" fill="#000"/><rect x="1159.5" y="46.5" width="201" height="20" fill="#fff" stroke="#808080" stroke-width="1"/><rect x="1160" y="47" width="18" height="19" fill="#D4D0C8"/><path d="M1178.5 47 v19" stroke="#808080"/><polygon points="1172.79,54.58 1174.75,55.10 1174.75,57.90 1172.79,58.42 1172.89,58.18 1173.90,59.93 1171.93,61.90 1170.18,60.89 1170.42,60.79 1169.90,62.75 1167.10,62.75 1166.58,60.79 1166.82,60.89 1165.07,61.90 1163.10,59.93 1164.11,58.18 1164.21,58.42 1162.25,57.90 1162.25,55.10 1164.21,54.58 1164.11,54.82 1163.10,53.07 1165.07,51.10 1166.82,52.11 1166.58,52.21 1167.10,50.25 1169.90,50.25 1170.42,52.21 1170.18,52.11 1171.93,51.10 1173.90,53.07 1172.89,54.82" fill="#2F6FE0" stroke="#1A4FB0" stroke-width="0.6"/><circle cx="1168.5" cy="56.5" r="3" fill="#8FB8F5"/><circle cx="1168.5" cy="56.5" r="1.5" fill="#fff"/><rect x="1297" y="47" width="64" height="19" fill="#D4D0C8"/><path d="M1315.5 47 v19 M1334.5 47 v19" stroke="#fff"/><path d="M1314.5 47 v19 M1333.5 47 v19" stroke="#808080"/><path d="M1297 66.5 h64" stroke="#808080"/><path d="M1303 56 h6 l-3 3 z" fill="#000"/><circle cx="1326.5" cy="54" r="4" fill="none" stroke="#2f6fd0" stroke-width="1.6"/><path d="M1323.5 57 l-4 4" stroke="#2f6fd0" stroke-width="2.2"/><rect x="1340" y="50" width="16" height="11" rx="1.5" fill="#6A8FC8"/><path d="M1343 61 l1 3 l3 -3 z" fill="#6A8FC8"/><text x="1345" y="59.5" font-family="Liberation Sans" font-weight="bold" font-size="10" fill="#fff">4</text><path d="M21.5 77.5 v11.5 l3 -2.5 l2.5 5 l2 -1 l-2.5 -4.8 h4 z" fill="#555" stroke="#555" stroke-width="0.5" stroke-linejoin="round"/><path d="M53.5 77 v6 M53.5 86 v6 M46 84.5 h6 M55 84.5 h6" stroke="#444" stroke-width="1"/><path d="M87.5 78 v13" stroke="#444"/><path d="M110 84.5 h12" stroke="#444"/><path d="M138 91 l12 -12" stroke="#444"/><path d="M163 87.5 l14 -9 M166 91.5 l13 -9 M164 85.5 l13 -8 M167 89 l2 -7 M171 86.5 l2 -7 M175 84 l2 -7" stroke="#555" stroke-width="1" fill="none"/><text x="175" y="93" font-family="Liberation Sans" font-weight="bold" font-size="6.5" fill="#444">E</text><path d="M193 77.5 h13 M193 80.5 h13 M193 84.5 h13 M193 88.5 h9" stroke="#555" stroke-dasharray="1 1"/><text x="203" y="93" font-family="Liberation Sans" font-weight="bold" font-size="6.5" fill="#444">F</text><text x="223.5" y="90" font-family="Liberation Sans" font-weight="bold" font-size="11" fill="#555">A</text><rect x="249.5" y="77.5" width="12" height="13" fill="none" stroke="#555" stroke-dasharray="1 1"/><text x="251.5" y="89" font-family="Liberation Sans" font-weight="bold" font-size="11" fill="#555">T</text><path d="M281 78 l3 3 l-3 3 l-3 -3 z M287 85 l3 3 l-3 3 l-3 -3 z" fill="#555"/><path d="M279 85 l2 2 l4 -5" fill="none" stroke="#555" stroke-width="1.2"/><path d="M294 83 h5 l-2.5 3 z" fill="#000"/><path d="M7.5 9 Q7.5 5 14 5 Q20.5 5 20.5 9 V17 Q20.5 20.5 14 20.5 Q7.5 20.5 7.5 17 Z" fill="#F39A2A"/><path d="M7.5 17 Q7.5 20.5 14 20.5 Q20.5 20.5 20.5 17 V12.5 Q15 12 7.5 15.5 Z" fill="#2a1505"/><path d="M9 8 Q14 5.5 19 8" fill="none" stroke="#FFE0B0" stroke-width="1.5"/><rect x="9.5" y="25.5" width="11" height="8" fill="#EAF2FC" stroke="#4a90e8" stroke-dasharray="1 0.5"/><rect x="12.5" y="29.5" width="11" height="8" fill="#fff" stroke="#4a90e8" stroke-dasharray="1 0.5"/><path d="M11 28.5 h3 l1 1.5 l1 -1.5 h3" fill="none" stroke="#4a90e8" stroke-width="0.8"/><path d="M14 34 l1.5 2 l1.5 -2 l1.5 2 l1.5 -2" fill="none" stroke="#4a90e8" stroke-width="0.8"/><rect x="1312" y="6" width="16" height="14" fill="#D4D0C8"/><path d="M1312.5 19 V6.5 H1327" fill="none" stroke="#fff"/><path d="M1312 19.5 H1327.5 V6" fill="none" stroke="#404040"/><path d="M1313.5 18 V7.5 H1326" fill="none" stroke="#D4D0C8"/><path d="M1313 18.5 H1326.5 V7" fill="none" stroke="#808080"/><rect x="1328" y="6" width="16" height="14" fill="#D4D0C8"/><path d="M1328.5 19 V6.5 H1343" fill="none" stroke="#fff"/><path d="M1328 19.5 H1343.5 V6" fill="none" stroke="#404040"/><path d="M1329.5 18 V7.5 H1342" fill="none" stroke="#D4D0C8"/><path d="M1329 18.5 H1342.5 V7" fill="none" stroke="#808080"/><rect x="1346" y="6" width="16" height="14" fill="#D4D0C8"/><path d="M1346.5 19 V6.5 H1361" fill="none" stroke="#fff"/><path d="M1346 19.5 H1361.5 V6" fill="none" stroke="#404040"/><path d="M1347.5 18 V7.5 H1360" fill="none" stroke="#D4D0C8"/><path d="M1347 18.5 H1360.5 V7" fill="none" stroke="#808080"/><rect x="1316" y="15" width="6" height="2" fill="#000"/><path d="M1351 9 l6 7 M1357 9 l-6 7" stroke="#000" stroke-width="1.6"/><rect x="1312" y="25" width="16" height="14" fill="#D4D0C8"/><path d="M1312.5 38 V25.5 H1327" fill="none" stroke="#fff"/><path d="M1312 38.5 H1327.5 V25" fill="none" stroke="#404040"/><path d="M1313.5 37 V26.5 H1326" fill="none" stroke="#D4D0C8"/><path d="M1313 37.5 H1326.5 V26" fill="none" stroke="#808080"/><rect x="1328" y="25" width="16" height="14" fill="#D4D0C8"/><path d="M1328.5 38 V25.5 H1343" fill="none" stroke="#fff"/><path d="M1328 38.5 H1343.5 V25" fill="none" stroke="#404040"/><path d="M1329.5 37 V26.5 H1342" fill="none" stroke="#D4D0C8"/><path d="M1329 37.5 H1342.5 V26" fill="none" stroke="#808080"/><rect x="1346" y="25" width="16" height="14" fill="#D4D0C8"/><path d="M1346.5 38 V25.5 H1361" fill="none" stroke="#fff"/><path d="M1346 38.5 H1361.5 V25" fill="none" stroke="#404040"/><path d="M1347.5 37 V26.5 H1360" fill="none" stroke="#D4D0C8"/><path d="M1347 37.5 H1360.5 V26" fill="none" stroke="#808080"/><rect x="1316" y="34" width="6" height="2" fill="#000"/><path d="M1351 28 l6 7 M1357 28 l-6 7" stroke="#000" stroke-width="1.6"/><rect x="1332.5" y="9.5" width="8" height="7" fill="none" stroke="#000"/><rect x="1332" y="9" width="9" height="2" fill="#000"/><rect x="1334.5" y="27.5" width="6" height="5" fill="none" stroke="#000"/><rect x="1334" y="27" width="7" height="2" fill="#000"/><rect x="1332.5" y="30.5" width="6" height="5" fill="#D4D0C8" stroke="#000"/><rect x="1332" y="30" width="7" height="2" fill="#000"/></svg><div class="m" style="left:261px;top:51px">Íîâûé Îðäåð</div><div class="m" style="left:389px;top:51px">Àâòî-òîðãîâëÿ</div><div class="tf" style="left:321px">M1</div><div class="tf" style="left:349px">M5</div><div class="tf" style="left:375px">M15</div><div class="tf" style="left:403px">M30</div><div class="tf" style="left:433px">H1</div><div class="tf" style="left:461px">H4</div><div class="tf" style="left:490px">D1</div><div class="tf" style="left:517px">W1</div><div class="tf" style="left:544px">MN</div><div class="p" style="left:1324px;top:121px">0.86485</div><div class="p" style="left:1324px;top:155px">0.86425</div><div class="p" style="left:1324px;top:190px">0.86365</div><div class="p" style="left:1324px;top:224px">0.86305</div><div class="p" style="left:1324px;top:259px">0.86245</div><div class="p" style="left:1324px;top:293px">0.86185</div><div class="p" style="left:1324px;top:328px">0.86125</div><div class="p" style="left:1324px;top:362px">0.86065</div><div class="p" style="left:1324px;top:396px">0.86005</div><div class="p" style="left:1324px;top:431px">0.85945</div><div class="p" style="left:1324px;top:465px">0.85885</div><div class="p" style="left:1324px;top:500px">0.85825</div><div class="p" style="left:1324px;top:534px">0.85765</div><div class="p" style="left:1324px;top:569px">0.85705</div><div class="p" style="left:1324px;top:603px">0.85645</div><div class="p" style="left:1324px;top:638px">0.85585</div><div class="p" style="left:1324px;top:672px">0.85525</div><div class="t" style="left:9px;top:685px">15 Apr 2014</div><div class="t" style="left:73px;top:685px">16 Apr 07:00</div><div class="t" style="left:137px;top:685px">16 Apr 15:00</div><div class="t" style="left:201px;top:685px">16 Apr 23:00</div><div class="t" style="left:265px;top:685px">17 Apr 07:00</div><div class="t" style="left:329px;top:685px">17 Apr 15:00</div><div class="t" style="left:393px;top:685px">17 Apr 23:00</div><div class="t" style="left:457px;top:685px">18 Apr 07:00</div><div class="t" style="left:521px;top:685px">18 Apr 15:00</div><div class="t" style="left:585px;top:685px">18 Apr 23:00</div><div class="t" style="left:649px;top:685px">21 Apr 07:00</div><div class="t" style="left:713px;top:685px">21 Apr 15:00</div><div class="t" style="left:777px;top:685px">21 Apr 23:00</div><div class="t" style="left:841px;top:685px">22 Apr 07:00</div><div class="t" style="left:905px;top:685px">22 Apr 15:00</div><div class="t" style="left:969px;top:685px">22 Apr 23:00</div><div class="t" style="left:1033px;top:685px">23 Apr 07:00</div><div class="tag" style="top:384px;height:11px;background:#0000C0">0.86027</div><div class="tag" style="top:435px;height:10px;line-height:10px;background:#000">0.85937</div><div class="tag" style="top:445px;height:11px;background:#FF0000">0.85921</div><div class="t" style="left:24px;top:102px;word-spacing:1px">NZDUSD,H1&nbsp; 0.85959 0.85967 0.85883 0.85937</div><div class="a" style="left:4px;top:701px;width:1360px;height:1px;background:#000"></div><div class="tab" style="left:19px">EURUSD,M30</div><div class="sep" style="left:96px"></div><div class="tab" style="left:107px">GBPUSD,H1</div><div class="sep" style="left:176px"></div><div class="tab" style="left:187px">EURJPY,Daily</div><div class="sep" style="left:264px"></div><div class="tab" style="left:274px">EURCHF,H4</div><div class="sep" style="left:344px"></div><div class="tab" style="left:355px">EURGBP,H1</div><div class="sep" style="left:424px"></div><div class="tab" style="left:435px">AUDNZD,H1</div><div class="sep" style="left:504px"></div><div class="tab" style="left:514px">GBPJPY,Daily</div><div class="sep" style="left:588px"></div><div class="tab" style="left:597px">USDCHF,Daily</div><div class="sep" style="left:676px"></div><div class="tab" style="left:686px">USDJPY,H1</div><div class="sep" style="left:752px"></div><div class="tab" style="left:762px">USDCAD,H4</div><div class="sep" style="left:832px"></div><div class="tab" style="left:844px">GBPCHF,H4</div><div class="sep" style="left:912px"></div><div class="tab" style="left:923px">AUDUSD,M15</div><div class="tab" style="left:1090px">XAUUSD,H4</div><div class="sep" style="left:1160px"></div><div class="a" style="left:1000px;top:701px;width:80px;height:19px;background:#fff;border:1px solid #000;border-top:none"></div><div class="tab" style="left:1010px;color:#000">NZDUSD,H1</div><div class="a" style="left:4px;top:721px;width:1360px;height:1px;background:#fff"></div><div class="a" style="left:4px;top:702px;width:2px;height:18px;background:#404040"></div><svg width="1368" height="746" style="position:absolute;left:0;top:0"><path d="M1339 708 v6 l-3.5 -3 z" fill="#A0A0A0"/><path d="M1353 708 v6 l3.5 -3 z" fill="#A0A0A0"/><rect x="1208" y="727" width="2" height="12" fill="#5A7A00"/><rect x="1208" y="737" width="2" height="2" fill="#A00000"/><rect x="1211" y="727" width="2" height="12" fill="#5A7A00"/><rect x="1211" y="736" width="2" height="3" fill="#A00000"/><rect x="1214" y="727" width="2" height="12" fill="#5A7A00"/><rect x="1214" y="735" width="2" height="4" fill="#A00000"/><rect x="1217" y="727" width="2" height="12" fill="#5A7A00"/><rect x="1217" y="734" width="2" height="5" fill="#A00000"/><rect x="1220" y="727" width="2" height="12" fill="#5A7A00"/><rect x="1220" y="733" width="2" height="6" fill="#A00000"/><rect x="1223" y="727" width="2" height="12" fill="#5A7A00"/><rect x="1223" y="732" width="2" height="7" fill="#A00000"/><rect x="1226" y="727" width="2" height="12" fill="#5A7A00"/><rect x="1226" y="731" width="2" height="8" fill="#A00000"/><rect x="1229" y="727" width="2" height="12" fill="#5A7A00"/><rect x="1229" y="730" width="2" height="9" fill="#A00000"/><path d="M1349 742 l14 -14 M1353 742 l10 -10 M1357 742 l6 -6 M1361 742 l2 -2" stroke="#808080" stroke-width="1"/><path d="M1350 742 l13 -13 M1354 742 l9 -9 M1358 742 l5 -5" stroke="#fff" stroke-width="1"/></svg><div class="st" style="left:6px">Äëÿ ñïðàâêè, íàæìèòå F1</div><div class="ss" style="left:643px"></div><div class="ss" style="left:752px"></div><div class="ss" style="left:853px"></div><div class="ss" style="left:925px"></div><div class="ss" style="left:996px"></div><div class="ss" style="left:1066px"></div><div class="ss" style="left:1136px"></div><div class="ss" style="left:1202px"></div><div class="st2" style="left:649px">Default</div><div class="st2" style="left:758px">2014.04.22 11:00</div><div class="st2" style="left:859px">O: 0.85820</div><div class="st2" style="left:930px">H: 0.85861</div><div class="st2" style="left:1002px">L: 0.85817</div><div class="st2" style="left:1070px">C: 0.85854</div><div class="st2" style="left:1141px">V: 1112</div><div class="st2" style="left:1259px">915/2 kb</div></body></html>
